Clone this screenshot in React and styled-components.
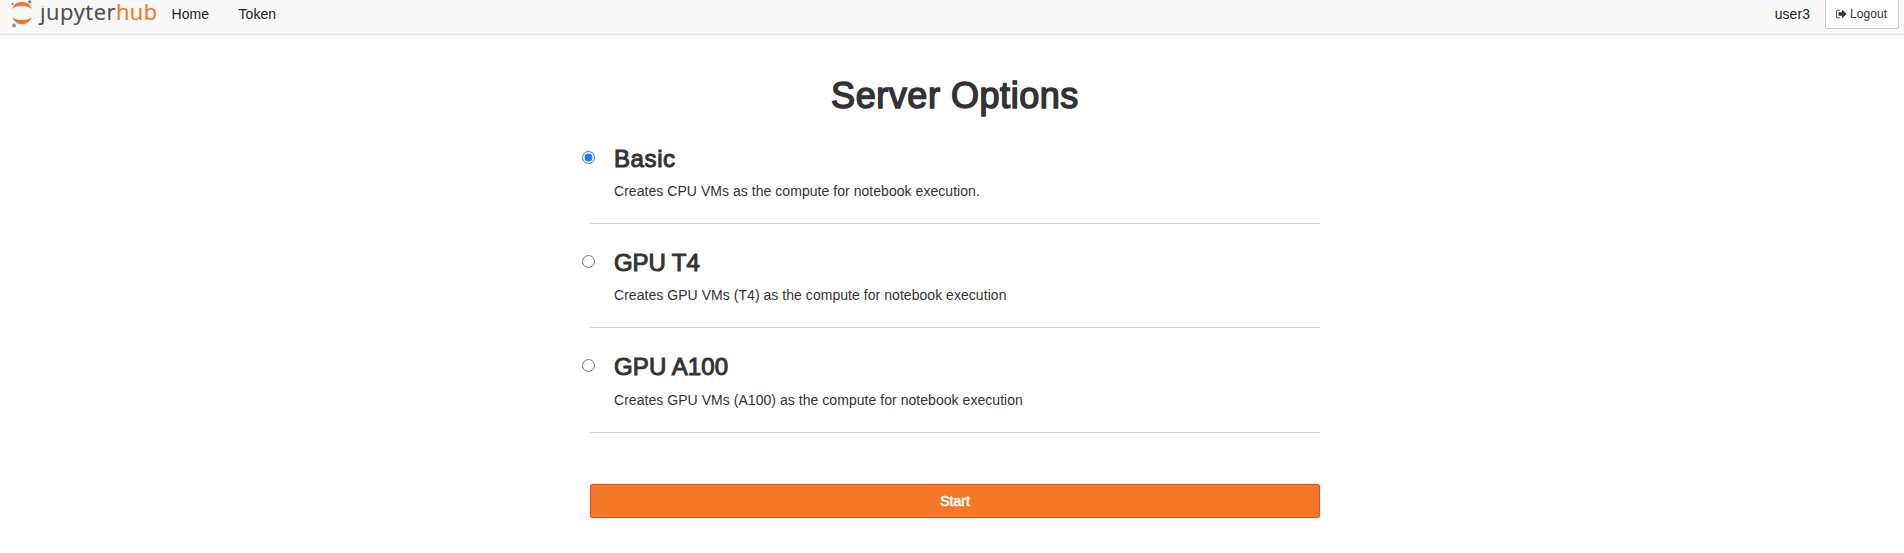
import React from "react";
import styled, { createGlobalStyle } from "styled-components";

const GlobalStyle = createGlobalStyle`
  *, *::before, *::after { box-sizing: border-box; }
  body {
    margin: 0;
    background: #fff;
    color: #333;
    font: 14px/20px "Helvetica Neue", "Liberation Sans", Arial, sans-serif;
  }
`;

const Navbar = styled.nav`
  display: flex;
  height: 35px;
  padding: 0 5px 0 11px;
  background: #f8f8f8;
  border-bottom: 1px solid #e0e0e0;
`;

const Brand = styled.a`
  display: flex;
  width: 146px;
  height: 29px;
`;

const LogoMark = styled.svg`
  flex: none;
  width: 22px;
  height: 28px;
`;

const Wordmark = styled.span`
  margin-left: 7px;
  font: 22px/22px "Open Sans", "Noto Sans", sans-serif;
  color: #4e4e4e;
  white-space: nowrap;
  letter-spacing: 0.45px;
  -webkit-text-stroke: 0.2px currentColor;
`;

const LetterJ = styled.span`
  display: inline-block;
  clip-path: inset(6px -4px -8px -4px);
`;

const Hub = styled.span`
  color: #f37726;
`;

const NavLink = styled.a`
  margin: 4px 15px 0 14.5px;
  color: #222;
  letter-spacing: 0.05px;
`;

const UserArea = styled.div`
  display: flex;
  margin-left: auto;
`;

const LogoutButton = styled.button`
  display: flex;
  align-items: center;
  gap: 3px;
  width: 74px;
  height: 30px;
  margin-top: -1px;
  padding: 0 0 0 10px;
  border: 1px solid #ccc;
  border-radius: 2px;
  background: #fff;
  color: #333;
  font: 12px/18px "Liberation Sans", Arial, sans-serif;
  letter-spacing: 0.1px;
`;

const Content = styled.main`
  width: 730px;
  margin-left: 590px;
`;

const mediumWeight = `
  font-weight: 400;
  -webkit-text-stroke: 0.042em currentColor;
`;

const PageTitle = styled.h1`
  margin: 0;
  padding-top: 41px;
  height: 84.4px;
  font-size: 36px;
  line-height: 40px;
  text-align: center;
  letter-spacing: 0.55px;
  ${mediumWeight}
`;

const Option = styled.label`
  display: flex;
  height: 104.4px;
  border-bottom: 1px solid #ccc;
`;

const Radio = styled.input`
  flex: none;
  width: 13px;
  height: 13px;
  margin: 31.2px 19px 0 -8px;
  accent-color: #2376ff;
`;

const OptionTitle = styled.h3`
  margin: 26.2px 0 9.2px;
  font-size: 24px;
  line-height: 26px;
  letter-spacing: ${(p) => p.$tracking};
  ${mediumWeight}
`;

const Description = styled.p`
  margin: 0;
  letter-spacing: 0.045px;
`;

const StartButton = styled.button`
  display: block;
  width: 100%;
  height: 34px;
  margin-top: 51.4px;
  border: 1px solid #e34f21;
  border-radius: 2px;
  background: #f37726;
  color: #fff;
  font-family: "Liberation Sans", Arial, sans-serif;
  font-size: 14px;
  ${mediumWeight}
`;

const options = [
  { name: "Basic", tracking: "0.6px", text: "Creates CPU VMs as the compute for notebook execution." },
  { name: "GPU T4", tracking: "-0.1px", text: "Creates GPU VMs (T4) as the compute for notebook execution" },
  { name: "GPU A100", tracking: "0.1px", text: "Creates GPU VMs (A100) as the compute for notebook execution" },
];

function JupyterMark() {
  return (
    <LogoMark viewBox="0 0 22 28" aria-hidden="true">
      <path d="M1.2 9 A10.3 10.3 0 0 1 20.8 9 C17 4.9 5 4.9 1.2 9Z" fill="#f37726" />
      <path d="M1.2 17 A10.3 10.3 0 0 0 20.8 17 C17 21.1 5 21.1 1.2 17Z" fill="#f37726" />
      <circle cx="1.5" cy="4" r="1.1" fill="#767677" />
      <circle cx="18.7" cy="1.8" r="1.6" fill="#767677" />
      <circle cx="3" cy="25.4" r="2" fill="#989798" />
    </LogoMark>
  );
}

function SignOutIcon() {
  return (
    <svg width="11" height="12" viewBox="0 0 1664 1792" fill="currentColor" aria-hidden="true">
      <path d="M640 1440q0 4 1 20t.5 26.500-3 23.500-10 19.500-20.500 6.500h-320q-119 0-203.500-84.500t-84.500-203.500v-704q0-119 84.500-203.500t203.500-84.500h320q13 0 22.500 9.500t9.500 22.500q0 4 1 20t.5 26.500-3 23.500-10 19.500-20.500 6.500h-320q-66 0-113 47t-47 113v704q0 66 47 113t113 47h312l11.500 1 11.500 3 8 5.500 7 9 2 13.500zm928-544q0 26-19 45l-544 544q-19 19-45 19t-45-19-19-45v-288h-448q-26 0-45-19t-19-45v-384q0-26 19-45t45-19h448v-288q0-26 19-45t45-19 45 19l544 544q19 19 19 45z" />
    </svg>
  );
}

export default function App() {
  return (
    <>
      <GlobalStyle />
      <Navbar>
        <Brand>
          <JupyterMark />
          <Wordmark><LetterJ>j</LetterJ>upyter<Hub>hub</Hub></Wordmark>
        </Brand>
        <NavLink>Home</NavLink>
        <NavLink>Token</NavLink>
        <UserArea>
          <NavLink>user3</NavLink>
          <LogoutButton><SignOutIcon />Logout</LogoutButton>
        </UserArea>
      </Navbar>
      <Content>
        <PageTitle>Server Options</PageTitle>
        {options.map((o, i) => (
          <Option key={o.name}>
            <Radio type="radio" name="profile" defaultChecked={i === 0} />
            <div>
              <OptionTitle $tracking={o.tracking}>{o.name}</OptionTitle>
              <Description>{o.text}</Description>
            </div>
          </Option>
        ))}
        <StartButton>Start</StartButton>
      </Content>
    </>
  );
}
